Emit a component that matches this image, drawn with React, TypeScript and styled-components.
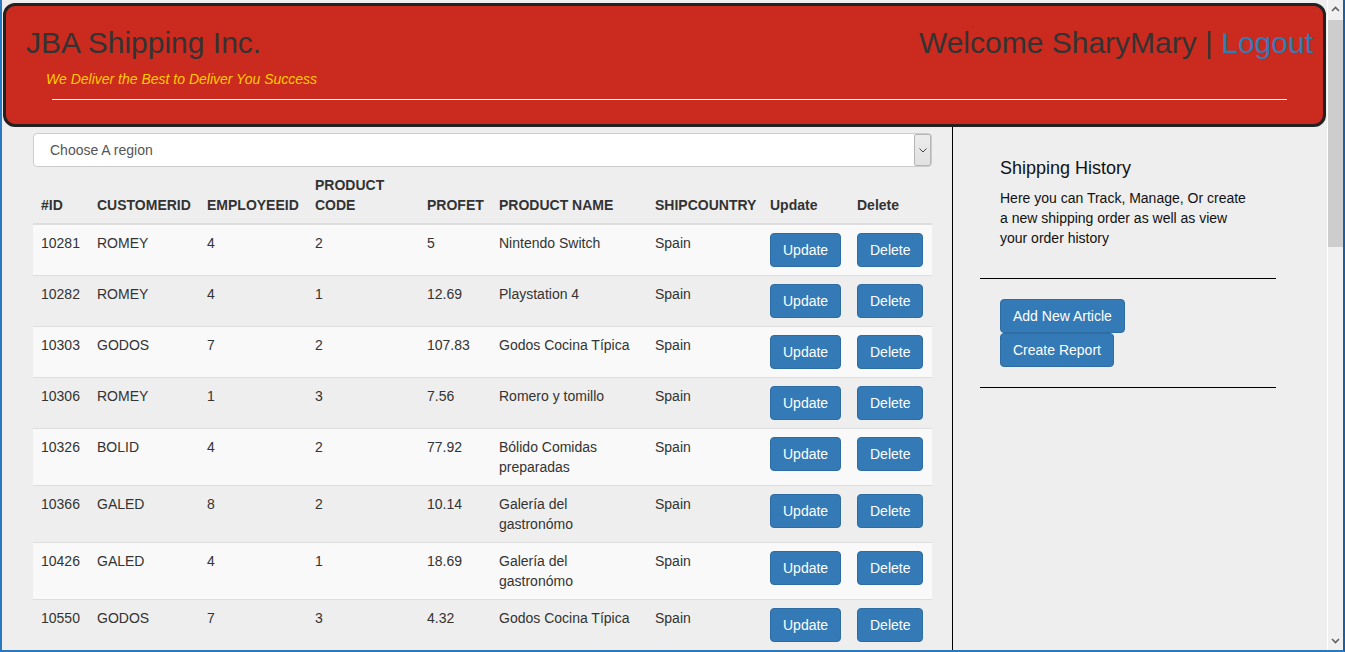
import React from 'react';
import styled, { createGlobalStyle } from 'styled-components';

const GlobalStyle = createGlobalStyle`
  html, body { margin: 0; padding: 0; }
  body {
    font-family: "Liberation Sans", Arial, Helvetica, sans-serif;
    font-size: 14px;
    line-height: 20px;
    color: #333;
    background: #eee;
    overflow: hidden;
  }
  * { box-sizing: border-box; }
`;

const Frame = styled.div`
  width: 1345px;
  height: 652px;
  display: flex;
  background: #eee;
  border-left: 2px solid #2a78c0;
  border-right: 2px solid #1d5f9e;
  border-bottom: 2px solid #2a78c0;
  overflow: hidden;
`;

const Page = styled.div`
  flex: 1;
  min-width: 0;
  display: flex;
  flex-direction: column;
`;

const Header = styled.header`
  height: 124px;
  margin: 3px 1px 0 1px;
  border: 3px solid #222;
  border-radius: 12px;
  background: #cb2a1e;
  flex-shrink: 0;
`;

const HeaderRow = styled.div`
  display: flex;
  justify-content: space-between;
  align-items: flex-start;
  padding: 0 10px 0 20px;
`;

const Brand = styled.div`
  display: flex;
  flex-direction: column;
`;

const Title = styled.h2`
  margin: 20px 0 10px;
  font-size: 30px;
  line-height: 33px;
  font-weight: 400;
  color: #333;
`;

const Tagline = styled.div`
  margin-left: 20px;
  font-style: italic;
  color: #fc0;
  font-size: 14px;
  line-height: 20px;
`;

const LogoutLink = styled.a`
  color: #337ab7;
  text-decoration: none;
`;

const HeaderRule = styled.div`
  margin: 10px 36px 0 46px;
  border-top: 1px solid #fff;
`;

const Body = styled.div`
  flex: 1;
  min-height: 0;
  display: flex;
`;

const Main = styled.main`
  width: 950px;
  flex-shrink: 0;
  padding: 6px 20px 0 31px;
`;

const SelectBox = styled.div`
  height: 34px;
  display: flex;
  align-items: stretch;
  background: #fff;
  border: 1px solid #ccc;
  border-radius: 4px;
`;

const SelectLabel = styled.span`
  flex: 1;
  padding: 6px 16px;
  color: #555;
  line-height: 20px;
`;

const SelectArrow = styled.span`
  width: 17px;
  display: flex;
  align-items: center;
  justify-content: center;
  border: 1px solid #b5b5b5;
  border-radius: 2px;
  background: linear-gradient(#ececec, #e1e1e1);
`;

const Table = styled.table`
  width: 899px;
  border-collapse: collapse;
  table-layout: fixed;
`;

const Th = styled.th`
  padding: 8px;
  text-align: left;
  vertical-align: bottom;
  font-weight: 700;
  color: #333;
  border-bottom: 2px solid #ddd;
`;

const Row = styled.tr<{ $striped: boolean }>`
  background: ${(p) => (p.$striped ? '#f9f9f9' : 'transparent')};
`;

const Td = styled.td`
  padding: 8px;
  vertical-align: top;
  border-top: 1px solid #ddd;
  color: #333;
`;

const Button = styled.button`
  display: inline-block;
  vertical-align: top;
  padding: 6px 12px;
  font-family: inherit;
  font-size: 14px;
  line-height: 20px;
  color: #fff;
  background: #337ab7;
  border: 1px solid #2e6da4;
  border-radius: 4px;
  cursor: pointer;
  white-space: nowrap;
`;

const Sidebar = styled.aside`
  flex: 1;
  border-left: 1px solid #000;
  padding: 31px 0 0 27px;
`;

const SideInner = styled.div`
  width: 296px;
`;

const SideSection = styled.div`
  padding: 0 20px;
`;

const SideTitle = styled.h4`
  margin: 0;
  font-size: 18px;
  line-height: 20px;
  font-weight: 400;
  color: #111;
`;

const SideText = styled.p`
  margin: 10px 0;
  color: #111;
`;

const SideRule = styled.div<{ $top: number }>`
  margin-top: ${(p) => p.$top}px;
  border-top: 1px solid #000;
`;

const SideButtons = styled.div`
  display: flex;
  flex-direction: column;
  align-items: flex-start;
  padding: 20px 20px 0;
`;

const ScrollBar = styled.div`
  width: 16px;
  flex-shrink: 0;
  display: flex;
  flex-direction: column;
  background: #f0f0f0;
  border-left: 1px solid #fff;
`;

const ScrollBtn = styled.div`
  height: 18px;
  display: flex;
  align-items: center;
  justify-content: center;
  flex-shrink: 0;
`;

const ScrollTrack = styled.div`
  flex: 1;
  padding-top: 2px;
`;

const ScrollThumb = styled.div`
  height: 227px;
  background: #cdcdcd;
`;

type Order = {
  id: string;
  customer: string;
  employee: string;
  code: string;
  profit: string;
  name: string;
  country: string;
};

const orders: Order[] = [
  { id: '10281', customer: 'ROMEY', employee: '4', code: '2', profit: '5', name: 'Nintendo Switch', country: 'Spain' },
  { id: '10282', customer: 'ROMEY', employee: '4', code: '1', profit: '12.69', name: 'Playstation 4', country: 'Spain' },
  { id: '10303', customer: 'GODOS', employee: '7', code: '2', profit: '107.83', name: 'Godos Cocina Típica', country: 'Spain' },
  { id: '10306', customer: 'ROMEY', employee: '1', code: '3', profit: '7.56', name: 'Romero y tomillo', country: 'Spain' },
  { id: '10326', customer: 'BOLID', employee: '4', code: '2', profit: '77.92', name: 'Bólido Comidas preparadas', country: 'Spain' },
  { id: '10366', customer: 'GALED', employee: '8', code: '2', profit: '10.14', name: 'Galería del gastronómo', country: 'Spain' },
  { id: '10426', customer: 'GALED', employee: '4', code: '1', profit: '18.69', name: 'Galería del gastronómo', country: 'Spain' },
  { id: '10550', customer: 'GODOS', employee: '7', code: '3', profit: '4.32', name: 'Godos Cocina Típica', country: 'Spain' },
];

const colWidths = [56, 110, 108, 112, 72, 156, 115, 87, 83];
const headers = ['#ID', 'CUSTOMERID', 'EMPLOYEEID', 'PRODUCT CODE', 'PROFET', 'PRODUCT NAME', 'SHIPCOUNTRY', 'Update', 'Delete'];

const Chevron = ({ up }: { up?: boolean }) => (
  <svg width="9" height="6" viewBox="0 0 9 6">
    <path
      d={up ? 'M1 5 L4.5 1.5 L8 5' : 'M1 1 L4.5 4.5 L8 1'}
      fill="none"
      stroke="#606060"
      strokeWidth="1.6"
    />
  </svg>
);

export default function App() {
  return (
    <>
      <GlobalStyle />
      <Frame>
        <Page>
          <Header>
            <HeaderRow>
              <Brand>
                <Title>JBA Shipping Inc.</Title>
                <Tagline>We Deliver the Best to Deliver You Success</Tagline>
              </Brand>
              <Title>
                Welcome SharyMary | <LogoutLink href="#">Logout</LogoutLink>
              </Title>
            </HeaderRow>
            <HeaderRule />
          </Header>
          <Body>
            <Main>
              <SelectBox>
                <SelectLabel>Choose A region</SelectLabel>
                <SelectArrow>
                  <svg width="8" height="5" viewBox="0 0 8 5">
                    <path d="M0.5 0.5 L4 4 L7.5 0.5" fill="none" stroke="#444" strokeWidth="1" />
                  </svg>
                </SelectArrow>
              </SelectBox>
              <Table>
                <colgroup>
                  {colWidths.map((w, i) => (
                    <col key={i} style={{ width: w }} />
                  ))}
                </colgroup>
                <thead>
                  <tr>
                    {headers.map((h) => (
                      <Th key={h}>{h}</Th>
                    ))}
                  </tr>
                </thead>
                <tbody>
                  {orders.map((o, i) => (
                    <Row key={o.id} $striped={i % 2 === 0}>
                      <Td>{o.id}</Td>
                      <Td>{o.customer}</Td>
                      <Td>{o.employee}</Td>
                      <Td>{o.code}</Td>
                      <Td>{o.profit}</Td>
                      <Td>{o.name}</Td>
                      <Td>{o.country}</Td>
                      <Td>
                        <Button>Update</Button>
                      </Td>
                      <Td>
                        <Button>Delete</Button>
                      </Td>
                    </Row>
                  ))}
                </tbody>
              </Table>
            </Main>
            <Sidebar>
              <SideInner>
                <SideSection>
                  <SideTitle>Shipping History</SideTitle>
                  <SideText>
                    Here you can Track, Manage, Or create a new shipping order as well as view your order history
                  </SideText>
                </SideSection>
                <SideRule $top={30} />
                <SideButtons>
                  <Button>Add New Article</Button>
                  <Button>Create Report</Button>
                </SideButtons>
                <SideRule $top={20} />
              </SideInner>
            </Sidebar>
          </Body>
        </Page>
        <ScrollBar>
          <ScrollBtn>
            <Chevron up />
          </ScrollBtn>
          <ScrollTrack>
            <ScrollThumb />
          </ScrollTrack>
          <ScrollBtn>
            <Chevron />
          </ScrollBtn>
        </ScrollBar>
      </Frame>
    </>
  );
}
